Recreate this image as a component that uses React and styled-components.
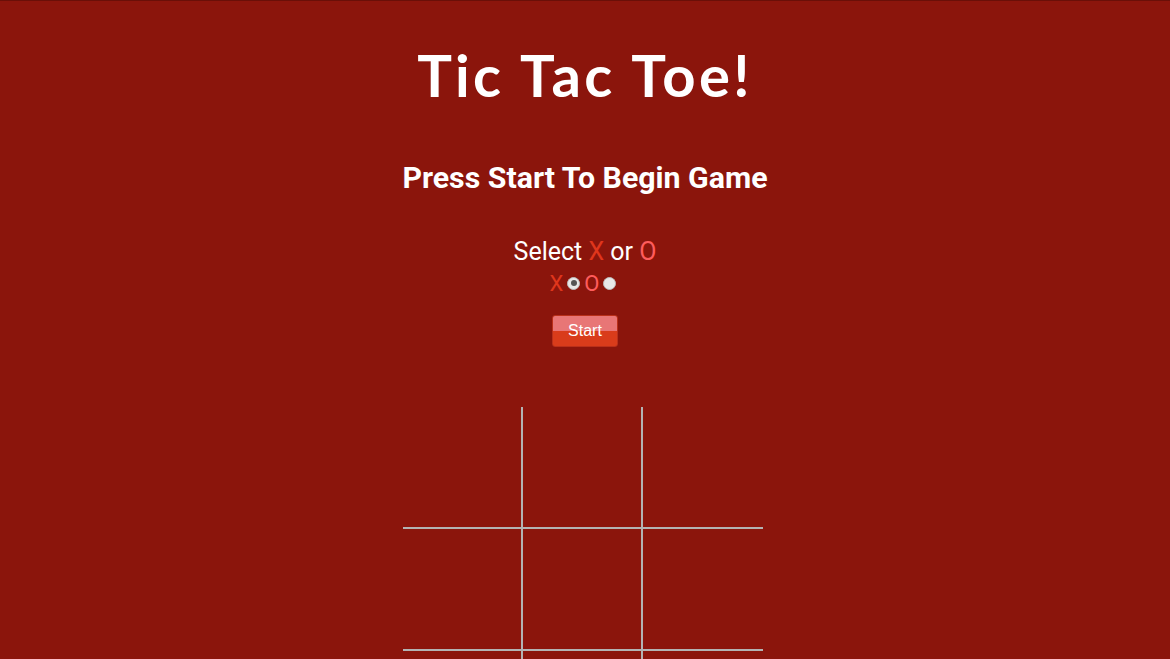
import React, { useState } from "react";
import styled, { createGlobalStyle } from "styled-components";

const GlobalStyle = createGlobalStyle`
    html, body {
        margin: 0;
        padding: 0;
        background: #8b150c;
        overflow: hidden;
    }
    body {
        border-top: 1px solid #6a0f08;
        font-family: Roboto, "Liberation Sans", sans-serif;
        color: #fff;
    }
`

const Page = styled.div`
    display: flex;
    flex-direction: column;
    align-items: center;
    & > * {
        flex-shrink: 0;
    }
`

const Title = styled.h1`
    margin: 39px 0 0;
    font-family: Lato, "Open Sans", sans-serif;
    font-weight: 700;
    font-size: 58px;
    line-height: 70px;
    letter-spacing: 3.3px;
`

const Message = styled.h2`
    margin: 50px 0 0;
    font-family: Roboto, sans-serif;
    font-weight: 700;
    font-size: 30.3px;
    line-height: 36px;
`

const Select = styled.div`
    margin-top: 41px;
    font-size: 25px;
    line-height: 30px;
`

const Mark = styled.span`
    color: ${props => props.player === 'X' ? '#e0361c' : '#ff5c5c'};
`

const Choices = styled.div`
    display: flex;
    align-items: center;
    margin-top: 4px;
    height: 24px;
    font-size: 22px;
`

const Radio = styled.input`
    appearance: none;
    width: 13px;
    height: 13px;
    margin: 0 4px;
    border-radius: 50%;
    border: 1px solid #bdbdbd;
    background: #e8e8e8;
    position: relative;
    &:checked::after {
        content: '';
        position: absolute;
        top: 2.5px;
        left: 2.5px;
        width: 6px;
        height: 6px;
        border-radius: 50%;
        background: #555;
    }
`

const StartButton = styled.button`
    margin-top: 20px;
    width: 66px;
    height: 32px;
    border: 1px solid #b9301a;
    border-radius: 3px;
    background: linear-gradient(#e87676 0, #e87676 50%, #d93c1b 50%, #d93c1b 100%);
    color: #fff;
    font-family: "Liberation Sans", Arial, sans-serif;
    font-size: 16px;
    padding: 0;
    cursor: pointer;
`

const Board = styled.div`
    margin: 60px 4px 0 0;
    display: grid;
    grid-template-columns: repeat(3, 120px);
    grid-auto-rows: 122px;
`

const Cell = styled.div`
    box-sizing: border-box;
    border-right: ${props => props.col < 2 ? '2px solid #b3b3b3' : 'none'};
    border-bottom: ${props => props.row < 2 ? '2px solid #b3b3b3' : 'none'};
`

export default function App() {
    const [player, setPlayer] = useState('X');
    const cells = Array.from({ length: 9 }, (_, i) => i);

    return (
        <Page>
            <GlobalStyle />
            <Title>Tic Tac Toe!</Title>
            <Message>Press Start To Begin Game</Message>
            <Select>
                Select <Mark player="X">X</Mark> or <Mark player="O">O</Mark>
            </Select>
            <Choices>
                <Mark player="X">X</Mark>
                <Radio type="radio" name="player" checked={player === 'X'} onChange={() => setPlayer('X')} />
                <Mark player="O">O</Mark>
                <Radio type="radio" name="player" checked={player === 'O'} onChange={() => setPlayer('O')} />
            </Choices>
            <StartButton>Start</StartButton>
            <Board>
                {cells.map(i => (
                    <Cell key={i} row={Math.floor(i / 3)} col={i % 3} />
                ))}
            </Board>
        </Page>
    );
}
